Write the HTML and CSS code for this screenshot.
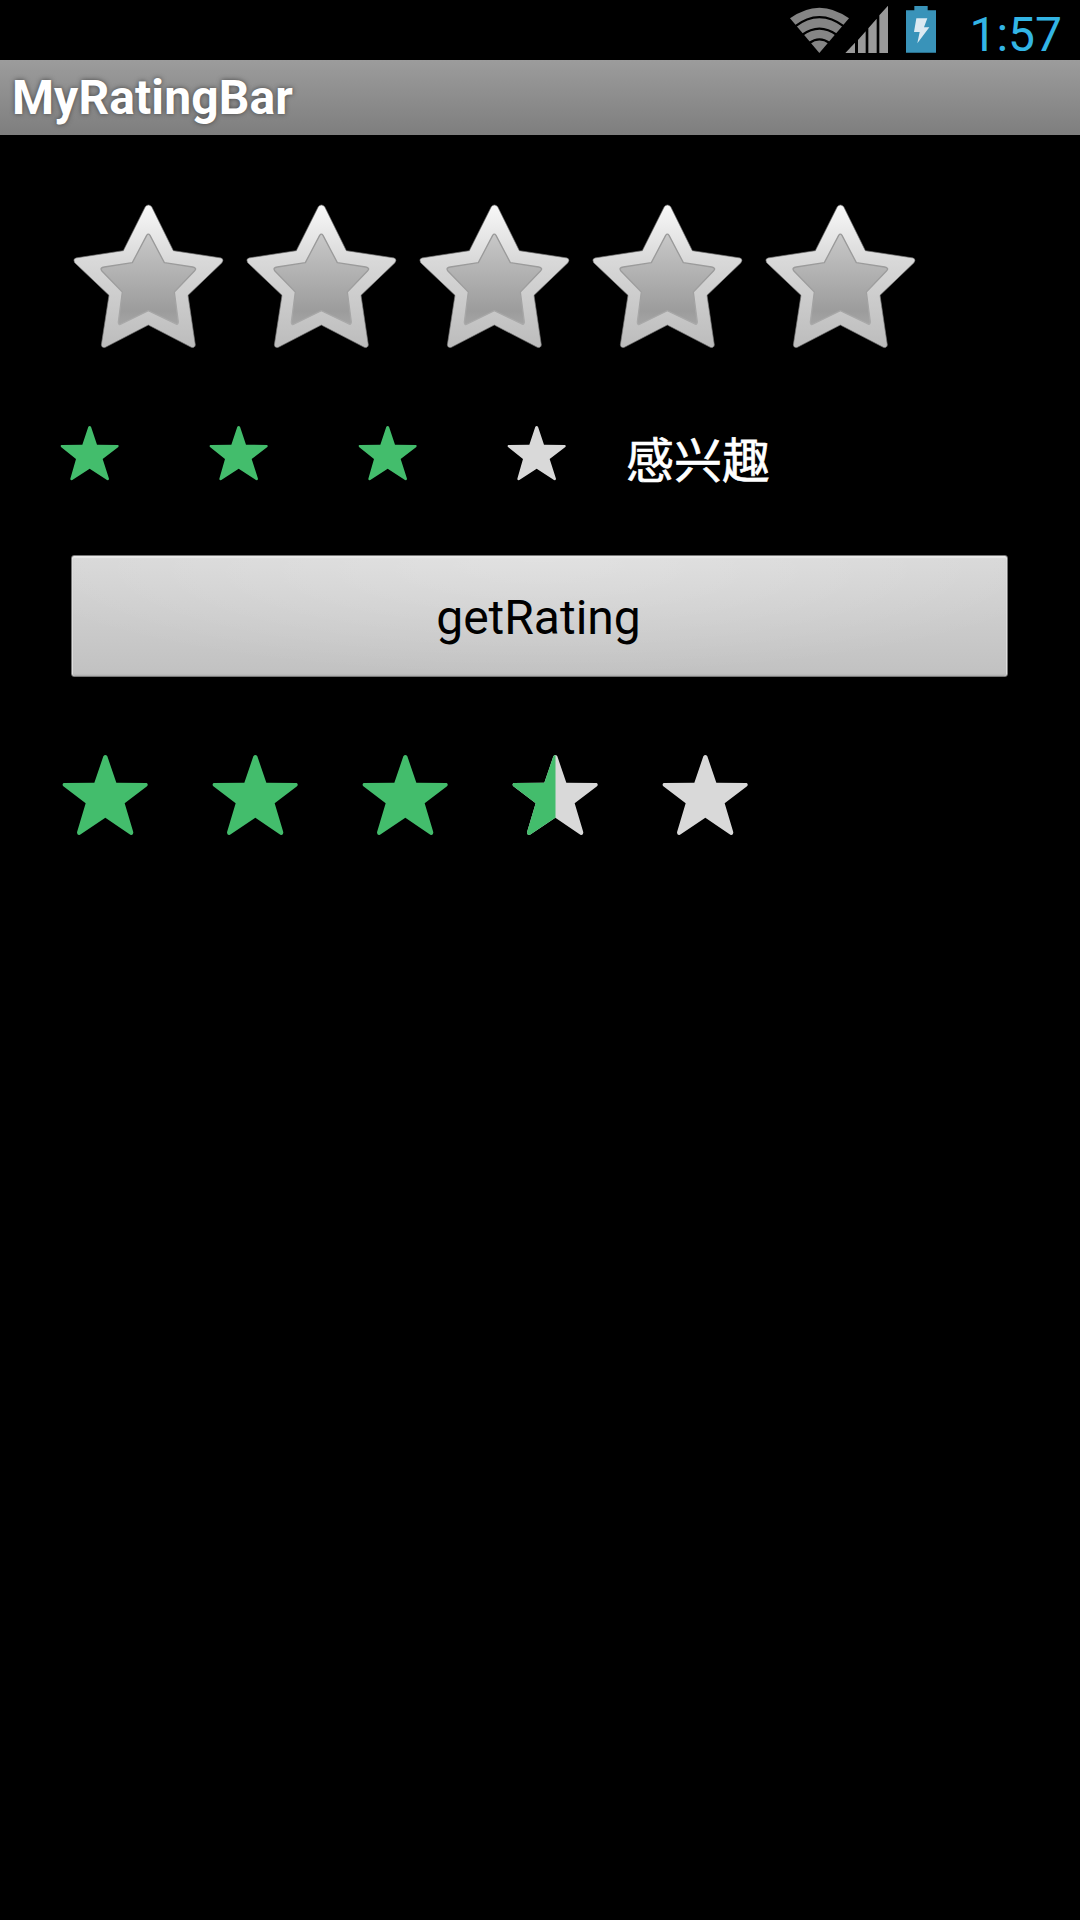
FILE: index.html
```html
<!DOCTYPE html>
<html lang="zh-CN">
<head>
<meta charset="utf-8">
<title>MyRatingBar</title>
<link rel="stylesheet" href="styles.css">
</head>
<body>
<svg class="defs" width="0" height="0">
  <defs>
    <linearGradient id="rim" x1="0" y1="0" x2="0" y2="1"><stop offset="0" stop-color="#f8f8f8"/><stop offset=".4" stop-color="#d8d8d8"/><stop offset="1" stop-color="#bcbcbc"/></linearGradient>
    <linearGradient id="core" x1="0" y1="0" x2="0" y2="1"><stop offset="0" stop-color="#c8c8c8"/><stop offset=".85" stop-color="#9c9c9c"/><stop offset="1" stop-color="#a4a4a4"/></linearGradient>
    <linearGradient id="edge" x1="0" y1="0" x2="0" y2="1"><stop offset="0" stop-color="#999"/><stop offset=".5" stop-color="#9c9c9c"/><stop offset="1" stop-color="#aaa"/></linearGradient>
    <symbol id="star-large" viewBox="6 0 519 540">
      <path fill="url(#rim)" stroke="#777" stroke-width="2" d="M256 50Q265 40 275 50L340 182L484 204Q493 209 486 218L384 316L406 465Q404 475 394 472L265 405L136 472Q126 475 124 465L147 316L44 218Q38 208 47 204L190 182Z"/>
      <path fill="url(#core)" stroke="url(#edge)" stroke-width="4" stroke-linejoin="round" d="M260 136Q265 129 270 136L313 218L398 231Q412 235 404 242L343 306L355 396Q354 406 346 401L265 362L184 402Q175 407 175 396L187 306L125 242Q119 233 133 231L217 218Z"/>
    </symbol>
    <symbol id="star-small" viewBox="-72 0 447 270">
      <path d="M145 50Q149 46 153 50L171 104L234 105Q238 107 235 111L188 147L207 206Q206 212 201 210L149 176L97 210Q91 212 91 206L108 147L63 111Q60 107 64 105L127 104Z"/>
    </symbol>
    <symbol id="star-medium" viewBox="0 0 450 330">
      <path d="M160 49Q166 41 172 49L199 128L290 129Q296 133 291 139L224 190L250 277Q250 287 241 284L166 233L90 284Q81 287 81 277L107 190L40 139Q35 133 41 129L133 128Z"/>
    </symbol>
    <clipPath id="left-half"><rect width="55.5" height="110"/></clipPath>
  </defs>
</svg>
<header class="status">
  <svg class="signals" viewBox="0 0 480 180">
    <path fill="#858585" d="M30 55Q118 -9 207 55L118 159Z"/>
    <g fill="none" stroke="#000" stroke-width="7"><path d="M44 80Q118 23 193 80"/><path d="M66 105Q118 67 171 105"/><path d="M88 129Q118 107 149 129"/></g>
    <path fill="#999" d="M196 159L225 128V159ZM234 159V120L257 94V159ZM265 159V85L290 56V159ZM298 159V46L324 17V159Z"/>
    <path fill="#3993b9" d="M378 31H403V18H443V31H468V158H378Z"/>
    <path fill="#dceaf2" d="M409 55H442L432 82H448L412 130L419 96H402Z"/>
  </svg>
  <span class="clock">1:57</span>
</header>
<h1 class="title">MyRatingBar</h1>
<main>
  <div class="row large">
    <svg><use href="#star-large"/></svg><svg><use href="#star-large"/></svg><svg><use href="#star-large"/></svg><svg><use href="#star-large"/></svg><svg><use href="#star-large"/></svg>
  </div>
  <div class="row small">
    <svg class="on"><use href="#star-small"/></svg><svg class="on"><use href="#star-small"/></svg><svg class="on"><use href="#star-small"/></svg><svg><use href="#star-small"/></svg>
    <span class="label">感兴趣</span>
  </div>
  <button class="button">getRating</button>
  <div class="row medium">
    <svg class="on"><use href="#star-medium"/></svg><svg class="on"><use href="#star-medium"/></svg><svg class="on"><use href="#star-medium"/></svg><svg><use href="#star-medium"/><g class="on" clip-path="url(#left-half)"><use href="#star-medium"/></g></svg><svg><use href="#star-medium"/></svg>
  </div>
</main>
</body>
</html>
```
FILE: styles.css
```css
* { box-sizing: border-box; }
body { margin: 0; min-height: 1920px; background: #000; font-family: Roboto, "Noto Sans CJK SC", sans-serif; overflow: hidden; }
.defs { display: block; height: 0; }
.status { height: 60px; display: flex; justify-content: flex-end; padding-right: 18px; }
.signals { width: 160px; height: 60px; margin-right: auto; margin-left: 780px; }
.clock { color: #33b5e5; font-size: 48px; line-height: 69px; white-space: nowrap; }
.title { margin: 0; height: 75px; padding-left: 12px; background: linear-gradient(#9c9c9c, #7e7e7e); color: #fff; font-size: 48px; font-weight: 700; letter-spacing: .1px; line-height: 75px; text-shadow: 0 0 5px #444; }
main { display: flex; flex-direction: column; }
.row { display: flex; }
.row svg { flex: none; display: block; fill: #d9d9d9; }
.row .on { fill: #43bd6c; }
.large { margin-top: 55px; padding-left: 62px; }
.large svg { width: 173px; height: 180px; }
.small { margin-top: 40px; padding-left: 16px; }
.small svg { width: 149px; height: 90px; }
.label { margin-left: 14px; color: #fff; font-size: 48px; -webkit-text-stroke: .6px #fff; line-height: 95px; height: 90px; font-family: "Noto Sans CJK SC", sans-serif; }
.button { margin: 55px 72px 0 71px; height: 122px; padding: 3px 2px 0 0; border: 1px solid #777; border-radius: 3px; color: #000; font: 48px Roboto, sans-serif; background: radial-gradient(ellipse 60% 100% at 50% 0, rgba(255,255,255,.25), transparent), linear-gradient(#d8d8d8, #c1c1c1); box-shadow: inset 0 2px 1px #e8e8e8, inset 1px 0 #ddd, inset -1px 0 #ddd, inset 0 -1px 2px #aaa; }
.medium { margin-top: 63px; padding-left: 50px; }
.medium svg { width: 150px; height: 110px; }
```
